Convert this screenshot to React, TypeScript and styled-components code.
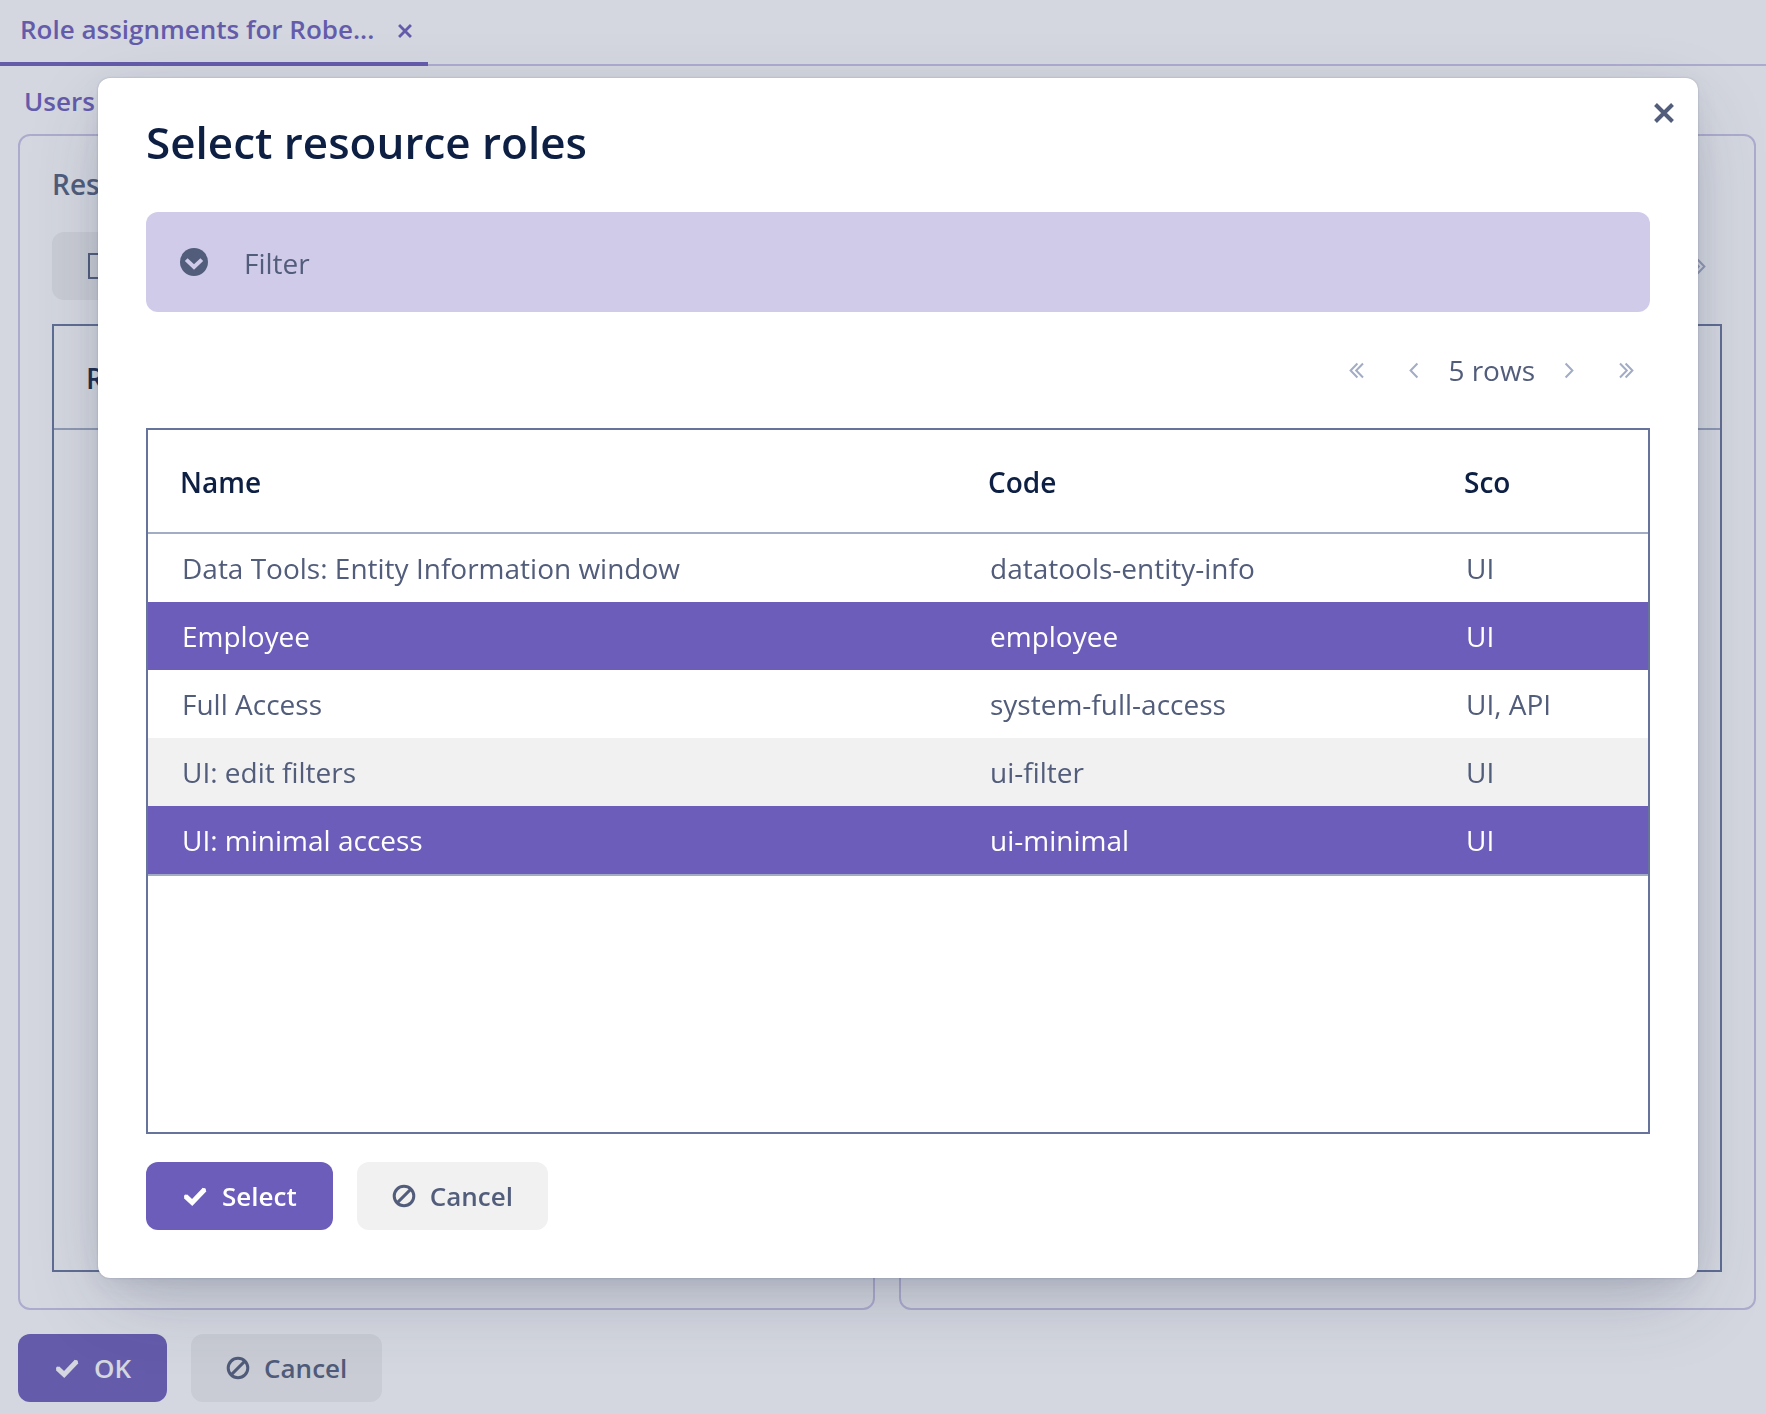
import React from "react";
import styled, { createGlobalStyle, css } from "styled-components";

const GlobalStyle = createGlobalStyle`
  *, *::before, *::after { box-sizing: border-box; }
  html, body, #root { height: 100%; margin: 0; }
  body {
    background: #fff;
    color: #525d7b;
    font-family: "Open Sans", "Noto Sans", sans-serif;
    font-size: 28px;
    line-height: 36px;
  }
`;

const Page = styled.div`
  display: flex;
  flex-direction: column;
  min-height: 100vh;
  overflow: hidden;
`;

const TabBar = styled.nav`
  display: flex;
  height: 66px;
  flex: none;
  box-shadow: inset 0 -2px 0 #cbc5e8;
`;

const Tab = styled.div`
  display: flex;
  align-items: flex-start;
  gap: 24px;
  width: 428px;
  padding: 11px 0 0 20px;
  border-bottom: 4px solid #6c5dbb;
  color: #6c5dbb;
`;

const TabTitle = styled.a`
  color: inherit;
  font-size: 26px;
  font-weight: 600;
  text-decoration: none;
  white-space: nowrap;
`;

const IconButton = styled.button<{ $w?: number; $h?: number }>`
  display: inline-flex;
  align-items: center;
  justify-content: center;
  width: ${(p) => p.$w ?? 40}px;
  height: ${(p) => p.$h ?? 40}px;
  padding: 0;
  border: 0;
  background: none;
  color: inherit;
`;

const Crumbs = styled.div`
  padding: 16px 24px;
  height: 68px;
  flex: none;
`;

const CrumbLink = styled.a`
  color: #6c5dbb;
  font-size: 26px;
  font-weight: 600;
  text-decoration: none;
`;

const Panels = styled.main`
  display: grid;
  grid-template-columns: 1fr 1fr;
  gap: 24px;
  flex: 1;
  padding: 0 10px 0 18px;
`;

const Panel = styled.section`
  display: flex;
  flex-direction: column;
  min-width: 0;
  padding: 30px 32px 36px;
  border: 2px solid #cbc5e8;
  border-radius: 12px;
`;

const PanelTitle = styled.h2`
  margin: 0 0 30px;
  font-size: 28px;
  line-height: 36px;
  font-weight: 600;
`;

const PanelTools = styled.div`
  display: flex;
  justify-content: space-between;
  align-items: center;
  margin-bottom: 24px;
`;

const Actions = styled.div`
  display: flex;
  gap: 24px;
`;

const Button = styled.button<{ $primary?: boolean }>`
  display: inline-flex;
  align-items: center;
  gap: 14px;
  height: 68px;
  padding: 0 35px;
  border: 0;
  border-radius: 12px;
  background: #f1f1f1;
  color: #525d7b;
  font: 600 26px/36px "Open Sans", "Noto Sans", sans-serif;
  ${(p) =>
    p.$primary &&
    css`
      padding: 0 36px;
      background: #6c5dbb;
      color: #fff;
    `}
`;

const PageActions = styled(Actions)`
  padding: 24px 18px 12px;
`;

const GridFrame = styled.div`
  flex: 1;
  border: 2px solid #66739a;
`;

const Grid = styled.table`
  width: 100%;
  border-collapse: separate;
  border-spacing: 0;
  table-layout: fixed;
`;

const HeadCell = styled.th<{ $w?: string }>`
  width: ${(p) => p.$w ?? "auto"};
  height: 104px;
  padding: 2px 0 0 32px;
  border-bottom: 2px solid #a2acc4;
  color: #0e1f44;
  font-weight: 600;
  text-align: left;
`;

const Row = styled.tr<{ $state?: "selected" | "hover" }>`
  background: ${(p) =>
    p.$state === "selected" ? "#6c5dbb" : p.$state === "hover" ? "#f1f1f1" : "#fff"};
  color: ${(p) => (p.$state === "selected" ? "#fff" : "#525d7b")};

  &:last-child td {
    height: 70px;
    border-bottom: 2px solid #a2acc4;
  }
`;

const Cell = styled.td`
  height: 68px;
  padding: 0 0 0 34px;
  white-space: nowrap;
`;

const Overlay = styled.div`
  position: fixed;
  inset: 0;
  display: flex;
  padding: 78px 68px 136px 98px;
  background: rgba(76, 88, 122, 0.24);
`;

const Dialog = styled.section`
  position: relative;
  display: flex;
  flex-direction: column;
  flex: 1;
  min-width: 0;
  padding: 40px 48px 48px;
  border-radius: 12px;
  background: #fff;
  box-shadow: 0 0 2px rgba(50, 60, 90, 0.3), 0 6px 24px -4px rgba(50, 60, 90, 0.12),
    0 26px 72px -12px rgba(50, 60, 90, 0.28);
`;

const DialogClose = styled(IconButton)`
  position: absolute;
  top: 15px;
  right: 14px;
`;

const DialogTitle = styled.h1`
  margin: 0 0 46px;
  color: #0e1f44;
  font-size: 44px;
  line-height: 48px;
  font-weight: 600;
`;

const Filter = styled.button`
  display: flex;
  align-items: center;
  gap: 36px;
  height: 100px;
  padding: 2px 34px 0;
  border: 0;
  border-radius: 12px;
  background: #d1cbea;
  color: #525d7b;
  font: 400 28px/36px "Open Sans", "Noto Sans", sans-serif;
`;

const Pager = styled.div`
  display: flex;
  justify-content: flex-end;
  align-items: center;
  height: 116px;
  margin-right: -6px;
`;

const PageButton = styled(IconButton)`
  color: #a2acc4;
`;

const PagerText = styled.span`
  padding: 0 5px;
`;

const DialogActions = styled(Actions)`
  padding-top: 28px;
`;

function Cross({ size, width }: { size: number; width: number }) {
  return (
    <svg width={size} height={size} viewBox="0 0 20 20" aria-hidden="true">
      <path d="M1.5 1.5 18.5 18.5M18.5 1.5 1.5 18.5" stroke="currentColor" strokeWidth={width} />
    </svg>
  );
}

function Check() {
  return (
    <svg width="26" height="26" viewBox="0 0 26 26" aria-hidden="true">
      <path d="M3.6 13.4 10.2 19.6 22.6 6.6" fill="none" stroke="currentColor" strokeWidth="5" strokeLinejoin="miter" />
      <circle cx="3.9" cy="13.4" r="1.9" fill="currentColor" />
      <circle cx="22" cy="7" r="2" fill="currentColor" />
    </svg>
  );
}

function Ban() {
  return (
    <svg width="24" height="24" viewBox="0 0 24 24" aria-hidden="true">
      <circle cx="12" cy="12" r="9.8" fill="none" stroke="currentColor" strokeWidth="3" />
      <path d="M5.4 18.6 18.6 5.4" stroke="currentColor" strokeWidth="3" />
    </svg>
  );
}

function ChevronDisc() {
  return (
    <svg width="28" height="28" viewBox="0 0 28 28" overflow="visible" aria-hidden="true">
      <circle cx="14" cy="13" r="14" fill="currentColor" />
      <path d="m6.2 10.6 7.8 7.4 7.8-7.4" fill="none" stroke="#d1cbea" strokeWidth="4" />
    </svg>
  );
}

function Chevron({ double, flip }: { double?: boolean; flip?: boolean }) {
  const w = double ? 14 : 10;
  return (
    <svg width={w} height="16" viewBox={`0 0 ${w} 16`} overflow="visible" aria-hidden="true">
      <g transform={flip ? `translate(${w} 0) scale(-1 1)` : undefined} fill="none" stroke="currentColor" strokeWidth="2">
        <path d="M8.4 1.5 1.6 8.5l6.8 7" />
        {double && <path d="M14 1.5 7.2 8.5l6.8 7" />}
      </g>
    </svg>
  );
}

function PagerNav({ text }: { text: string }) {
  return (
    <>
      <PageButton $w={58} aria-label="First page"><Chevron double /></PageButton>
      <PageButton $w={58} aria-label="Previous page"><Chevron /></PageButton>
      <PagerText>{text}</PagerText>
      <PageButton $w={58} aria-label="Next page"><Chevron flip /></PageButton>
      <PageButton $w={58} aria-label="Last page"><Chevron double flip /></PageButton>
    </>
  );
}

function AddIcon() {
  return (
    <svg width="26" height="26" viewBox="0 0 26 26" aria-hidden="true">
      <path d="M2 1h23v24H2z" fill="none" stroke="currentColor" strokeWidth="2" />
    </svg>
  );
}

type Role = { name: string; code: string; scope: string; state?: "selected" | "hover" };

const roles: Role[] = [
  { name: "Data Tools: Entity Information window", code: "datatools-entity-info", scope: "UI" },
  { name: "Employee", code: "employee", scope: "UI", state: "selected" },
  { name: "Full Access", code: "system-full-access", scope: "UI, API" },
  { name: "UI: edit filters", code: "ui-filter", scope: "UI", state: "hover" },
  { name: "UI: minimal access", code: "ui-minimal", scope: "UI", state: "selected" },
];

function RolePanel({ title }: { title: string }) {
  return (
    <Panel>
      <PanelTitle>{title}</PanelTitle>
      <PanelTools>
        <Button aria-label="Add"><AddIcon /></Button>
        <PageButton $w={46} aria-label="Last page"><Chevron double flip /></PageButton>
      </PanelTools>
      <GridFrame>
        <Grid>
          <thead>
            <tr><HeadCell scope="col">R</HeadCell></tr>
          </thead>
        </Grid>
      </GridFrame>
    </Panel>
  );
}

export default function App() {
  return (
    <>
      <GlobalStyle />
      <Page>
        <TabBar>
          <Tab>
            <TabTitle href="#roles">Role assignments for Robe...</TabTitle>
            <IconButton $w={14} $h={40} aria-label="Close tab"><Cross size={14} width={4} /></IconButton>
          </Tab>
        </TabBar>
        <Crumbs><CrumbLink href="#users">Users</CrumbLink></Crumbs>
        <Panels>
          <RolePanel title="Res" />
          <RolePanel title="Row" />
        </Panels>
        <PageActions>
          <Button $primary><Check />OK</Button>
          <Button><Ban />Cancel</Button>
        </PageActions>
      </Page>
      <Overlay>
        <Dialog role="dialog" aria-modal="true" aria-labelledby="dialog-title">
          <DialogClose aria-label="Close"><Cross size={20} width={4} /></DialogClose>
          <DialogTitle id="dialog-title">Select resource roles</DialogTitle>
          <Filter aria-expanded="false"><ChevronDisc />Filter</Filter>
          <Pager><PagerNav text="5 rows" /></Pager>
          <GridFrame>
            <Grid>
              <thead>
                <tr>
                  <HeadCell scope="col">Name</HeadCell>
                  <HeadCell scope="col" $w="476px">Code</HeadCell>
                  <HeadCell scope="col" $w="216px">Sco</HeadCell>
                </tr>
              </thead>
              <tbody>
                {roles.map((role) => (
                  <Row key={role.code} $state={role.state}>
                    <Cell>{role.name}</Cell>
                    <Cell>{role.code}</Cell>
                    <Cell>{role.scope}</Cell>
                  </Row>
                ))}
              </tbody>
            </Grid>
          </GridFrame>
          <DialogActions>
            <Button $primary><Check />Select</Button>
            <Button><Ban />Cancel</Button>
          </DialogActions>
        </Dialog>
      </Overlay>
    </>
  );
}
